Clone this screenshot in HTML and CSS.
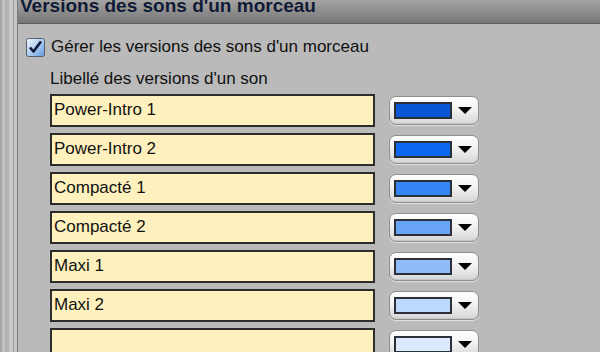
FILE: index.html
```html
<!DOCTYPE html>
<html lang="fr">
<head>
  <meta charset="UTF-8">
  <title>Versions des sons d'un morceau</title>
  <link rel="stylesheet" href="styles.css">
</head>
<body>
  <div class="window">
    <!-- Left frame edge -->
    <div class="rail"></div>

    <section class="panel">
      <h1 class="title-bar">Versions des sons d'un morceau</h1>

      <div class="panel-body">
        <label class="check-row">
          <span class="checkbox">
            <svg width="19" height="19" viewBox="0 0 19 19">
              <defs>
                <linearGradient id="cbFill" x1="0" y1="0" x2="1" y2="1">
                  <stop offset="0" stop-color="#f4f8ff"/>
                  <stop offset="0.55" stop-color="#a9c9f0"/>
                  <stop offset="1" stop-color="#5f97dc"/>
                </linearGradient>
              </defs>
              <rect x="0.5" y="0.5" width="18" height="18" rx="2" fill="url(#cbFill)" stroke="#55606e"/>
              <path d="M4 9.5 L7.5 13.5 L15 3.5" fill="none" stroke="#0c1838" stroke-width="2.6" stroke-linejoin="round"/>
            </svg>
          </span>
          Gérer les versions des sons d'un morceau
        </label>

        <div class="field-label">Libellé des versions d'un son</div>

        <div class="version-list">
          <div class="version-row">
            <div class="name-box">Power-Intro 1</div>
            <div class="color-pick"><span class="swatch" style="--c:#0a57d6"></span><span class="arrow"></span></div>
          </div>
          <div class="version-row">
            <div class="name-box">Power-Intro 2</div>
            <div class="color-pick"><span class="swatch" style="--c:#0c68ef"></span><span class="arrow"></span></div>
          </div>
          <div class="version-row">
            <div class="name-box">Compacté 1</div>
            <div class="color-pick"><span class="swatch" style="--c:#3386f4"></span><span class="arrow"></span></div>
          </div>
          <div class="version-row">
            <div class="name-box">Compacté 2</div>
            <div class="color-pick"><span class="swatch" style="--c:#68a4f6"></span><span class="arrow"></span></div>
          </div>
          <div class="version-row">
            <div class="name-box">Maxi 1</div>
            <div class="color-pick"><span class="swatch" style="--c:#90bdf9"></span><span class="arrow"></span></div>
          </div>
          <div class="version-row">
            <div class="name-box">Maxi 2</div>
            <div class="color-pick"><span class="swatch" style="--c:#bcd8fc"></span><span class="arrow"></span></div>
          </div>
          <div class="version-row">
            <div class="name-box"></div>
            <div class="color-pick"><span class="swatch" style="--c:#dbe9fd"></span><span class="arrow"></span></div>
          </div>
        </div>
      </div>
    </section>
  </div>
</body>
</html>
```

FILE: styles.css
```css
body {
  margin: 0;
  padding: 0;
  font-family: "Liberation Sans", Arial, sans-serif;
  color: #111;
  background-color: #bababa;
  overflow: hidden;
}

.window {
  display: flex;
  height: 352px;
  overflow: hidden;
}

/* Left frame edge */
.rail {
  width: 18px;
  flex-shrink: 0;
  background: linear-gradient(to right,
    #a6a6a6 0, #a6a6a6 2px,
    #c3c3c3 2px, #c3c3c3 5px,
    #b4b4b4 5px, #b4b4b4 9px,
    #c9c9c9 9px, #c9c9c9 13px,
    #9c9c9c 13px, #9c9c9c 14px,
    #c6c6c6 14px, #c6c6c6 17px,
    #7d7d7d 17px, #7d7d7d 18px);
}

.panel {
  flex: 1;
}

/* Title bar */
.title-bar {
  margin: 0;
  height: 23px;
  padding-left: 2px;
  font-size: 19px;
  font-weight: bold;
  line-height: 11px;
  color: #0c1a3c;
  background: linear-gradient(to bottom, #a4a4a4, #767676);
  border-bottom: 1px solid #5c5c5c;
  overflow: hidden;
  text-shadow: 0 0 2px rgba(200, 170, 120, 0.5);
}

.panel-body {
  padding: 13px 0 0 8px;
}

/* Checkbox row */
.check-row {
  display: flex;
  align-items: center;
  gap: 6px;
  height: 20px;
  font-size: 17px;
  line-height: 20px;
}

.checkbox {
  width: 19px;
  height: 19px;
  display: flex;
}

.field-label {
  margin: 12px 0 0 24px;
  font-size: 17px;
  line-height: 20px;
}

/* Version rows */
.version-list {
  margin: 5px 0 0 24px;
  display: flex;
  flex-direction: column;
  gap: 6px;
}

.version-row {
  display: flex;
  align-items: center;
  gap: 14px;
}

.name-box {
  width: 317px;
  height: 25px;
  padding: 4px 2px 0;
  border: 2px solid #2c2c2c;
  background-color: #fff1bd;
  font-size: 17px;
  line-height: 20px;
}

.color-pick {
  width: 90px;
  height: 29px;
  border: 1px solid #8e8e8e;
  border-radius: 7px;
  background: linear-gradient(to bottom, #ffffff 0%, #f2f2f2 45%, #d6d6d6 100%);
  box-shadow: 0 1px 1px rgba(255, 255, 255, 0.6), inset 0 -1px 1px rgba(0, 0, 0, 0.08);
  display: flex;
  align-items: center;
  padding-left: 4px;
  box-sizing: border-box;
}

.swatch {
  width: 58px;
  height: 17px;
  box-sizing: border-box;
  border: 2px solid #2a2f38;
  background-color: var(--c);
}

.arrow {
  margin-left: 6px;
  width: 0;
  height: 0;
  border-left: 7px solid transparent;
  border-right: 7px solid transparent;
  border-top: 7px solid #000;
}
```
